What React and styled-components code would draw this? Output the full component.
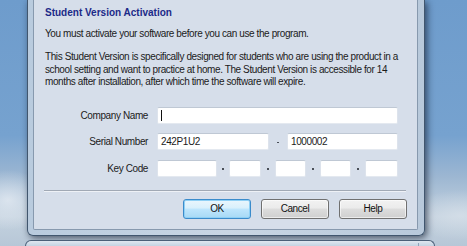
import React from 'react'
import styled, { createGlobalStyle } from 'styled-components'

const GlobalStyle = createGlobalStyle`
  html, body {
    margin: 0;
    padding: 0;
    width: 467px;
    height: 246px;
    overflow: hidden;
  }
  body {
    font-family: "Liberation Sans", Arial, sans-serif;
    font-size: 10px;
  }
`

const Desktop = styled.div`
  width: 467px;
  height: 246px;
  display: flex;
  flex-direction: column;
  background:
    radial-gradient(ellipse 40px 30px at 8px 200px, rgba(235, 240, 246, 0.7), transparent),
    radial-gradient(ellipse 50px 25px at 460px 215px, rgba(220, 228, 236, 0.6), transparent),
    linear-gradient(180deg, #6e9ccc 0%, #76a2cf 55%, #9db7d2 72%, #c4d2df 88%, #b7c7d7 100%);
  overflow: hidden;
`

const Window = styled.div`
  margin-left: 27px;
  width: 398px;
  box-sizing: border-box;
  display: flex;
  border: 1px solid #41566e;
  border-top: none;
  border-radius: 0 0 6px 6px;
  padding: 0 6px 5px 5px;
  background: linear-gradient(90deg, #b9cbde 0%, #c9d6e4 50%, #b8c9db 100%);
  box-shadow: 2px 2px 7px rgba(12, 22, 40, 0.65);
`

const Client = styled.div`
  flex: 1;
  display: flex;
  flex-direction: column;
  background: #d6deea;
  border: 1px solid #8799ae;
  border-top: none;
  border-radius: 0 0 2px 2px;
  padding: 7px 10px 10px 10px;
  color: #1b1b1b;
  letter-spacing: -0.4px;
`

const Title = styled.div`
  font-weight: bold;
  color: #1c2a88;
  line-height: 12px;
  letter-spacing: 0;
  padding-left: 1px;
`

const Text = styled.div`
  line-height: ${(p) => p.$lh || 12}px;
  margin-top: ${(p) => p.$top}px;
  padding-left: 1px;
  white-space: nowrap;
`

const Form = styled.div`
  margin-top: 18px;
  margin-left: 1px;
  display: flex;
  flex-direction: column;
  gap: 9px;
`

const Row = styled.div`
  display: flex;
  align-items: center;
  margin-top: ${(p) => p.$top || 0}px;
`

const Label = styled.div`
  width: 103px;
  margin-right: 9px;
  text-align: right;
`

const Field = styled.div`
  width: ${(p) => p.$w}px;
  height: 17px;
  box-sizing: border-box;
  background: #ffffff;
  border: 1px solid;
  border-color: #bfc8d4 #dde3ec #e4e9f0 #dde3ec;
  border-radius: 2px;
  padding: 0 3px;
  display: flex;
  align-items: center;
  line-height: 15px;
`

const Caret = styled.span`
  display: inline-block;
  width: 1px;
  height: 11px;
  background: #111;
`

const Sep = styled.div`
  width: ${(p) => p.$w}px;
  height: 17px;
  display: flex;
  align-items: center;
  justify-content: center;
  padding-top: 2px;
  box-sizing: border-box;
`

const Dot = styled.span`
  width: 2px;
  height: ${(p) => (p.$dash ? 1 : 2)}px;
  background: #4a4f58;
`

const Divider = styled.div`
  margin-top: 13px;
  margin-right: 1px;
  border-top: 1px solid #a1a9b5;
  border-bottom: 1px solid #eef1f6;
`

const Buttons = styled.div`
  margin-top: 7px;
  display: flex;
  justify-content: flex-end;
  gap: 10px;
`

const Button = styled.div`
  width: 68px;
  height: 20px;
  box-sizing: border-box;
  display: flex;
  align-items: center;
  justify-content: center;
  border-radius: 3px;
  border: 1px solid ${(p) => (p.$focus ? '#3a8bcb' : '#707070')};
  background: ${(p) =>
    p.$focus
      ? 'linear-gradient(180deg, #eaf6fd 0%, #d9f0fc 45%, #bee6fd 50%, #a7d9f5 100%)'
      : 'linear-gradient(180deg, #f2f2f2 0%, #ebebeb 45%, #dddddd 50%, #cfcfcf 100%)'};
  box-shadow: ${(p) =>
    p.$focus ? 'inset 0 0 0 1px #8fd0f5' : 'inset 0 0 0 1px rgba(255,255,255,0.6)'};
  color: #111;
`

const NextWindow = styled.div`
  margin-top: 4px;
  margin-left: 25px;
  width: 408px;
  flex: 1;
  border: 1px solid #4a5f78;
  border-bottom: none;
  border-radius: 6px 6px 0 0;
  background: linear-gradient(180deg, #dfe7f0 0%, #c4d3e2 100%);
  display: flex;
  justify-content: flex-end;
`

const Tab = styled.div`
  width: 12px;
  margin: 2px 3px 0 0;
  border-left: 1px solid #8fa3ba;
`

const keyParts = [
  { w: 60, sep: 12 },
  { w: 32, sep: 14 },
  { w: 31, sep: 14 },
  { w: 31, sep: 14 },
  { w: 33 },
]

export default function App() {
  return (
    <>
      <GlobalStyle />
      <Desktop>
        <Window>
          <Client>
            <Title>Student Version Activation</Title>
            <Text $top={9}>You must activate your software before you can use the program.</Text>
            <Text $top={11} $lh={12.5}>
              This Student Version is specifically designed for students who are using the product in a
              <br />
              school setting and want to practice at home. The Student Version is accessible for 14
              <br />
              months after installation, after which time the software will expire.
            </Text>
            <Form>
              <Row>
                <Label>Company Name</Label>
                <Field $w={241}>
                  <Caret />
                </Field>
              </Row>
              <Row>
                <Label>Serial Number</Label>
                <Field $w={112}>242P1U2</Field>
                <Sep $w={18}>
                  <Dot $dash />
                </Sep>
                <Field $w={111}>1000002</Field>
              </Row>
              <Row $top={1}>
                <Label>Key Code</Label>
                {keyParts.map((k, i) => (
                  <React.Fragment key={i}>
                    <Field $w={k.w} />
                    {k.sep && (
                      <Sep $w={k.sep}>
                        <Dot />
                      </Sep>
                    )}
                  </React.Fragment>
                ))}
              </Row>
            </Form>
            <Divider />
            <Buttons>
              <Button $focus>OK</Button>
              <Button>Cancel</Button>
              <Button>Help</Button>
            </Buttons>
          </Client>
        </Window>
        <NextWindow>
          <Tab />
        </NextWindow>
      </Desktop>
    </>
  )
}
